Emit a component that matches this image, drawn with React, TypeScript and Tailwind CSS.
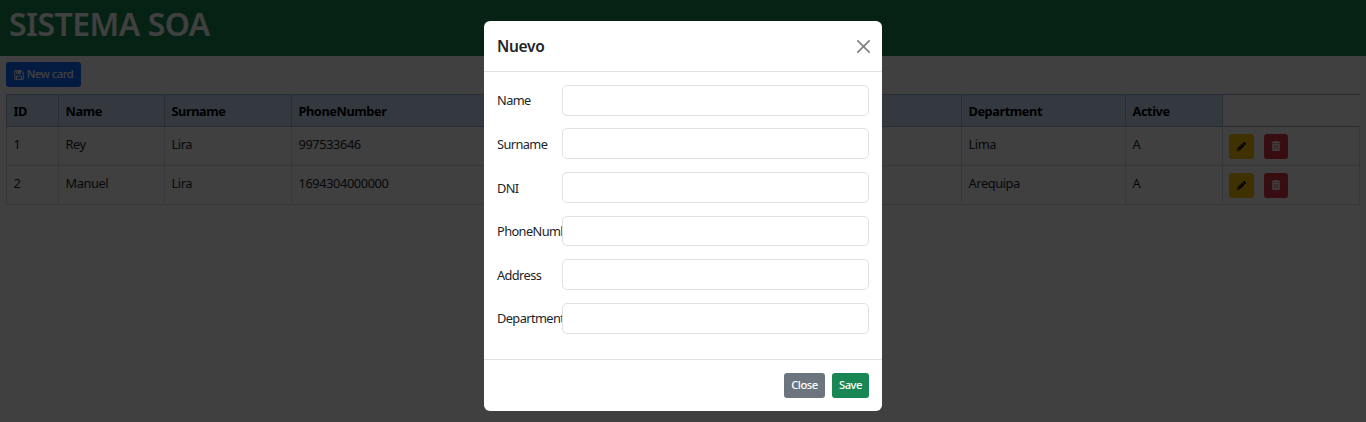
import React from "react";
import { FaPencilAlt, FaTrashAlt } from "react-icons/fa";

type Card = {
  id: number;
  name: string;
  surname: string;
  phone: string;
  department: string;
  active: string;
};

const cards: Card[] = [
  { id: 1, name: "Rey", surname: "Lira", phone: "997533646", department: "Lima", active: "A" },
  { id: 2, name: "Manuel", surname: "Lira", phone: "1694304000000", department: "Arequipa", active: "A" },
];

const fields = ["Name", "Surname", "DNI", "PhoneNumber", "Address", "Department"];

function FloppyIcon() {
  return (
    <svg viewBox="0 0 14 14" className="h-[10px] w-[10px]" fill="none" stroke="currentColor" strokeWidth="1.4">
      <path d="M1 1h9l3 3v9H1z" />
      <path d="M3.5 13V8.5h7V13M3.5 1v4h5.5V1" />
      <path d="M6.5 1h2v3h-2z" fill="currentColor" />
    </svg>
  );
}

function HeadCell({ children }: { children?: React.ReactNode }) {
  return (
    <th className="border border-[#a6b5cc] bg-[#cfe2ff] px-[6.5px] pt-[2px] text-left font-bold tracking-[-0.45px] text-black">
      {children}
    </th>
  );
}

function Cell({ children }: { children?: React.ReactNode }) {
  return (
    <td className="border border-[#d6dade] px-[6.5px] pb-[3px] tracking-[-0.4px]">{children}</td>
  );
}

function CardTable() {
  return (
    <table className="mt-[7px] w-[1354px] table-fixed border-collapse text-[12.8px] leading-[19px]">
      <colgroup>
        <col className="w-[52px]" />
        <col className="w-[106px]" />
        <col className="w-[127px]" />
        <col className="w-[335px]" />
        <col className="w-[335px]" />
        <col className="w-[164px]" />
        <col className="w-[97px]" />
        <col />
      </colgroup>
      <thead>
        <tr className="h-8">
          <HeadCell>ID</HeadCell>
          <HeadCell>Name</HeadCell>
          <HeadCell>Surname</HeadCell>
          <HeadCell>PhoneNumber</HeadCell>
          <HeadCell>Address</HeadCell>
          <HeadCell>Department</HeadCell>
          <HeadCell>Active</HeadCell>
          <th className="border-y border-[#a6b5cc]" />
        </tr>
      </thead>
      <tbody>
        {cards.map((card) => (
          <tr key={card.id} className="h-[39px]">
            <Cell>{card.id}</Cell>
            <Cell>{card.name}</Cell>
            <Cell>{card.surname}</Cell>
            <Cell>{card.phone}</Cell>
            <Cell />
            <Cell>{card.department}</Cell>
            <Cell>{card.active}</Cell>
            <td className="border border-[#d6dade] px-[6px]">
              <div className="flex gap-[10px]">
                <button className="flex h-[25px] w-[25px] items-center justify-center rounded-[3px] bg-[#ffc107] text-black">
                  <FaPencilAlt size={9} />
                </button>
                <button className="flex h-[25px] w-6 items-center justify-center rounded-[3px] bg-[#dc3545] text-white">
                  <FaTrashAlt size={10} />
                </button>
              </div>
            </td>
          </tr>
        ))}
      </tbody>
    </table>
  );
}

function NewCardDialog() {
  return (
    <div
      role="dialog"
      className="flex h-[390px] w-[398px] flex-col rounded-[6px] bg-white text-[#212529]"
    >
      <div className="flex h-[51px] items-center justify-between border-b border-[#dee2e6] pl-[13px] pr-3">
        <h5 className="text-[15.5px] font-semibold leading-6 tracking-[-0.3px]">Nuevo</h5>
        <button aria-label="Close">
          <svg viewBox="0 0 16 16" className="h-[13px] w-[13px] text-[#808080]" fill="currentColor">
            <path d="M.293.293a1 1 0 0 1 1.414 0L8 6.586 14.293.293a1 1 0 1 1 1.414 1.414L9.414 8l6.293 6.293a1 1 0 0 1-1.414 1.414L8 9.414l-6.293 6.293a1 1 0 0 1-1.414-1.414L6.586 8 .293 1.707a1 1 0 0 1 0-1.414z" />
          </svg>
        </button>
      </div>
      <form className="flex flex-1 flex-col gap-[12.85px] px-[13px] pt-[12.8px]">
        {fields.map((field) => (
          <div key={field} className="flex h-[30.75px] items-center">
            <label className="w-[65px] shrink-0 whitespace-nowrap pt-[1.4px] text-[12.8px] leading-[19px] tracking-[-0.6px]">
              {field}
            </label>
            <input className="h-full min-w-0 flex-1 rounded-[5px] border border-[#dee2e6] bg-white px-2" />
          </div>
        ))}
      </form>
      <div className="flex h-[52px] items-center justify-end gap-[7px] border-t border-[#dee2e6] pr-[13px] text-[11.2px] font-medium leading-[17px] tracking-[-0.45px] text-white">
        <button className="h-[25px] w-[41px] rounded-[3px] bg-[#6c757d] pb-0.5">Close</button>
        <button className="h-[25px] w-[37px] rounded-[3px] bg-[#198754] pb-0.5">Save</button>
      </div>
    </div>
  );
}

export default function App() {
  return (
    <div className="relative h-[422px] w-[1366px] overflow-hidden bg-white font-['Noto_Sans','Open_Sans',sans-serif] text-[#212529]">
      <header className="h-14 bg-[#198754] pl-[9px] pt-[5px]">
        <h1 className="text-[32px] font-semibold leading-[38px] tracking-[-0.5px] text-white">SISTEMA SOA</h1>
      </header>
      <main className="px-[6px] pt-[6px]">
        <button className="flex h-[25px] w-[75px] items-center justify-center gap-[3px] whitespace-nowrap rounded-[3px] bg-[#0d6efd] text-[11.2px] font-medium tracking-[-0.45px] text-white">
          <FloppyIcon />
          New card
        </button>
        <CardTable />
      </main>
      <div className="absolute inset-0 flex items-start justify-center bg-black/75 pt-[21px]">
        <NewCardDialog />
      </div>
    </div>
  );
}
